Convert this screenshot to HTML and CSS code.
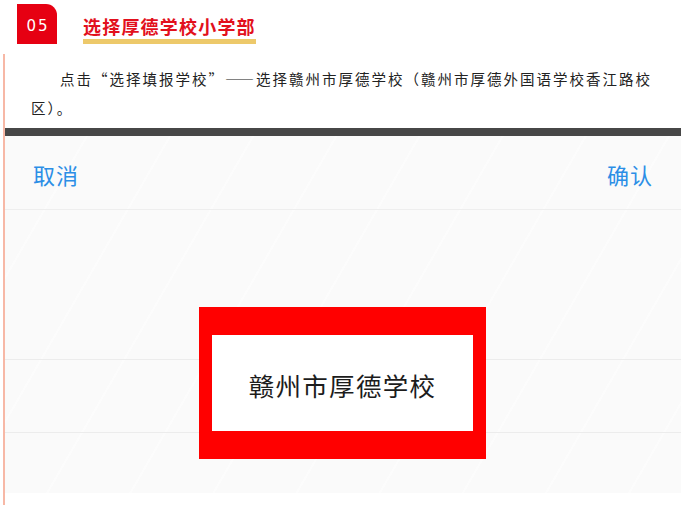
FILE: index.html
```html
<!DOCTYPE html>
<html lang="zh">
<head>
<meta charset="utf-8">
<title>选择厚德学校小学部</title>
<link rel="stylesheet" href="styles.css">
</head>
<body>
<header class="head">
  <div class="tile">05</div>
  <h1 class="title">选择厚德学校小学部</h1>
</header>
<section class="section">
  <p class="para">点击“选择填报学校”——选择赣州市厚德学校（赣州市厚德外国语学校香江路校区）。</p>
  <div class="shot">
    <div class="bar"></div>
    <div class="panel">
      <div class="toolbar">
        <span class="btn">取消</span>
        <span class="btn">确认</span>
      </div>
      <div class="picker">
        <div class="band"></div>
        <div class="mark"><span class="mark-text">赣州市厚德学校</span></div>
      </div>
    </div>
  </div>
</section>
</body>
</html>
```
FILE: styles.css
```css
* { box-sizing: border-box; }
html, body { margin: 0; padding: 0; background: #fff; }
body {
  width: 681px;
  height: 505px;
  overflow: hidden;
  font-family: "Noto Sans CJK SC", "Noto Sans", sans-serif;
}
.head {
  display: flex;
  align-items: flex-start;
  padding: 4px 0 0 17px;
  height: 54px;
}
.tile {
  width: 40px;
  height: 40px;
  background: #e60012;
  border-top-right-radius: 11px;
  color: #fff;
  font-family: "DejaVu Sans", sans-serif;
  font-size: 15px;
  letter-spacing: 2px;
  display: flex;
  align-items: center;
  justify-content: center;
  padding: 4px 0 0 2px;
}
.title {
  margin: 0 0 0 26px;
  width: 173px;
  height: 40px;
  font-size: 18px;
  line-height: 26px;
  font-weight: 700;
  color: #e2101c;
  letter-spacing: 1.2px;
  white-space: nowrap;
  padding-top: 9px;
  border-bottom: 5px solid #edc96b;
}
.section {
  margin-left: 3px;
  border-left: 2px solid #f7b8a6;
  height: 451px;
}
.para {
  margin: 0;
  padding: 10px 14px 6px 26px;
  font-size: 14.5px;
  line-height: 29px;
  letter-spacing: 2px;
  text-indent: 29px;
  color: #222;
}
.bar {
  height: 8px;
  background: #474747;
}
.panel {
  height: 357px;
  background-color: #fafafa;
  background-image: repeating-linear-gradient(120deg, rgba(255,255,255,0) 0 70px, rgba(255,255,255,0.45) 70px 72px);
}
.toolbar {
  height: 74px;
  display: flex;
  justify-content: space-between;
  align-items: center;
  padding: 2px 28px 0 28px;
  border-bottom: 1px solid #eeeeee;
}
.btn {
  font-size: 22px;
  color: #2b8ee6;
  letter-spacing: 1px;
}
.picker {
  position: relative;
  padding-top: 149px;
}
.band {
  height: 74px;
  border-top: 1px solid #ececec;
  border-bottom: 1px solid #ececec;
}
.mark {
  position: absolute;
  left: 194px;
  top: 97px;
  width: 287px;
  height: 152px;
  border-style: solid;
  border-color: #ff0000;
  border-width: 28px 13px 28px 13px;
  background: #fff;
  display: flex;
  align-items: center;
  justify-content: center;
}
.mark-text {
  font-size: 25.5px;
  color: #1c1c1c;
  letter-spacing: 1.3px;
  padding-top: 3px;
}
```
